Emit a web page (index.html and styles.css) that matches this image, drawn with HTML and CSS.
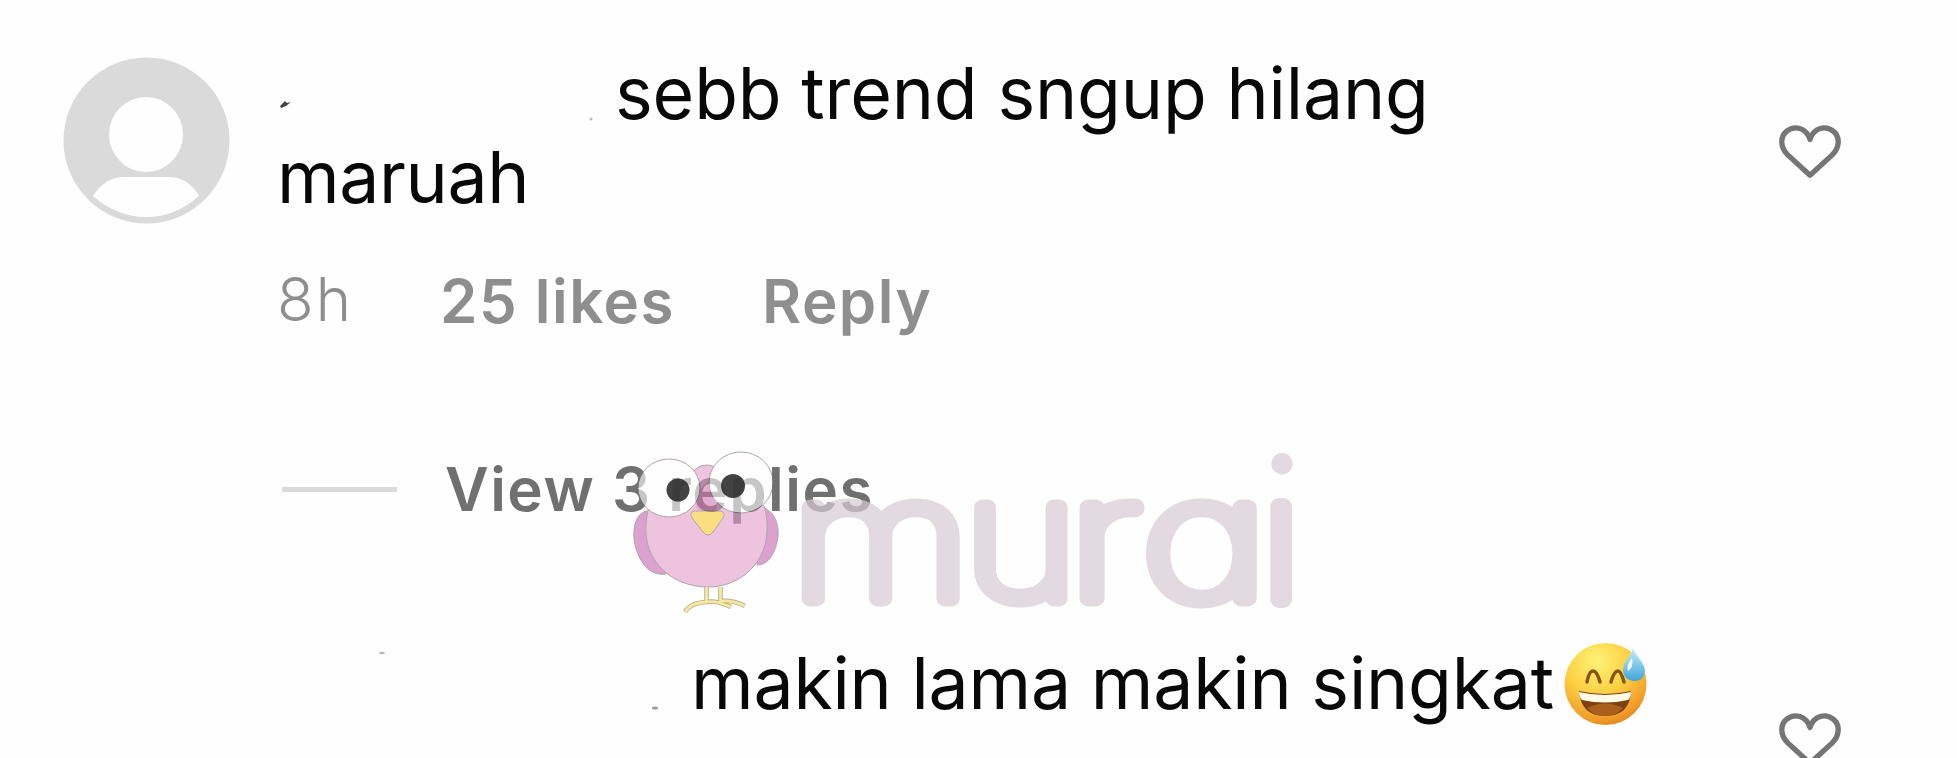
FILE: index.html
```
<!DOCTYPE html>
<html lang="ms">
<head>
  <meta charset="UTF-8" />
  <title>Comments</title>
  <link rel="stylesheet" href="styles.css">
</head>
<body>

<!-- First comment -->
<div class="comment">
  <svg class="avatar" viewBox="0 0 167 167">
    <circle cx="83.5" cy="83.5" r="83" fill="#dadada"/>
    <ellipse cx="83" cy="77.5" rx="37" ry="37.5" fill="#fefefe"/>
    <path d="M30 139Q42 120 61 120H106Q125 120 136 139Q112 160 83.5 160Q54 160 30 139Z" fill="#fefefe"/>
  </svg>
  <div class="body">
    <p class="text"><span class="name"></span><span class="line-one">sebb trend sngup hilang</span><br><span class="line-two">maruah</span></p>
    <div class="meta">
      <span class="time">8h</span>
      <span class="likes">25 likes</span>
      <span class="reply">Reply</span>
    </div>
    <div class="replies">
      <span class="rule"></span>
      <span class="view">View 3 replies</span>
    </div>
  </div>
  <svg class="heart" viewBox="0 0 64 56">
    <path d="M32 52L9 31C1 23 1 12 8 6.500C16 0 28 3 32 15C36 3 48 0 56 6.500C63 12 63 23 55 31Z"/>
  </svg>
</div>

<!-- Second comment -->
<div class="comment second">
  <div class="avatar"></div>
  <div class="body">
    <p class="text"><span class="name long"></span><span class="line-three">makin lama makin singkat</span><svg class="emoji" viewBox="0 0 84 84">
      <defs>
        <radialGradient id="face" cx="40%" cy="22%" r="80%">
          <stop offset="0" stop-color="#fff276"/>
          <stop offset=".5" stop-color="#fbd043"/>
          <stop offset=".85" stop-color="#f3a12b"/>
          <stop offset="1" stop-color="#e58a22"/>
        </radialGradient>
        <linearGradient id="drop" x1="0" y1="0" x2="0" y2="1">
          <stop offset="0" stop-color="#c9eefa"/>
          <stop offset="1" stop-color="#3fa5dc"/>
        </linearGradient>
      </defs>
      <circle cx="41.500" cy="42" r="41" fill="url(#face)"/>
      <path d="M23 40Q25 29 29 29Q33 29 36 40M47 40Q50 29 54 29Q57 29 60 40" fill="none" stroke="#8a5410" stroke-width="3.500" stroke-linecap="round"/>
      <path d="M15 49Q41 55 67 49Q66 74 41 74Q17 74 15 49Z" fill="#7c4210"/>
      <path d="M23 66Q41 57 59 66Q52 74 41 74Q30 74 23 66Z" fill="#a8601c"/>
      <path d="M15 50Q41 56 67 50Q67 56 64 58Q41 63 18 58Q15 55 15 50Z" fill="#fff9e8"/>
      <path d="M69 6C71 14 81 20 81 29Q80 39 70 39Q59 38 59 28C59 20 67 15 69 6Z" fill="url(#drop)"/>
      <path d="M68 16Q62 23 64 29Q70 25 68 16Z" fill="#f2fcff"/>
    </svg></p>
  </div>
  <svg class="heart" viewBox="0 0 64 56">
    <path d="M32 52L9 31C1 23 1 12 8 6.500C16 0 28 3 32 15C36 3 48 0 56 6.500C63 12 63 23 55 31Z"/>
  </svg>
</div>

<!-- Watermark -->
<svg class="watermark" viewBox="630 440 680 180">
  <defs>
    <clipPath id="stem"><rect x="0" y="-103" width="60" height="125"/></clipPath>
  </defs>
  <g class="bird">
    <path d="M647 511C636 513 633 527 634 538C636 558 648 577 666 574Z" fill="#c564b0"/>
    <path d="M764 508C775 512 779 525 778 536C776 552 769 565 757 565Z" fill="#c564b0"/>
    <path d="M707 465C721 465 724 480 736 486L764 506C768 518 768 532 765 545C758 570 735 587 708 587C680 587 655 571 648 545C644 532 646 518 649 506L682 486C691 479 692 465 707 465Z" fill="#e29cca"/>
    <path d="M700 490L707 482L714 490L717 509Q706 515 696 508Z" fill="#d078af" stroke="none"/>
    <path d="M706.500 587V602M720.500 587V602M706 602Q690 603 685 612M706 602Q716 600 731 607M720 601Q733 600 745 606" fill="none" stroke="#857b48" stroke-width="4.500"/>
    <path d="M706.500 587V602M720.500 587V602M706 602Q690 603 685 612M706 602Q716 600 731 607M720 601Q733 600 745 606" fill="none" stroke="#f3da62" stroke-width="2.800"/>
    <ellipse cx="669" cy="488" rx="31" ry="29" fill="#fff"/>
    <ellipse cx="741" cy="482.500" rx="32" ry="30.500" fill="#fff"/>
    <path d="M694 511H721Q726 513 723 518L713 532Q708 538 703 532L692 518Q689 513 694 511Z" fill="#f9cc30"/>
  </g>
  <circle cx="678" cy="490" r="11.500" class="pupil"/>
  <circle cx="733" cy="486" r="12" class="pupil"/>
  <g class="brand">
    <text transform="translate(791 599) scale(1.233 1)">m</text>
    <text transform="translate(964 599) scale(1.158 1)">u</text>
    <text transform="translate(1068 599) scale(1.33 1)">r</text>
    <text transform="translate(1142 599) scale(1.29 1)">a</text>
    <text class="wide" transform="translate(1263 599)" clip-path="url(#stem)">i</text>
    <circle cx="1282" cy="463.700" r="10.700" stroke="none"/>
  </g>
</svg>

<!-- Leftovers of the removed names -->
<svg class="specks" viewBox="0 0 1957 758">
  <path d="M280 106L285 101L287 103L291 102L286 106L281 108Z" fill="#444"/>
  <circle cx="591" cy="119" r="1.500" fill="#bbb"/>
  <ellipse cx="382" cy="653" rx="3" ry="1.200" fill="#bbb"/>
  <ellipse cx="655" cy="708" rx="3" ry="1.500" fill="#999"/>
</svg>

</body>
</html>
```
FILE: styles.css
```
body {
  position: relative;
  margin: 0;
  height: 758px;
  overflow: hidden;
  background: #fefefe;
  color: #080808;
  font-family: Inter, "Liberation Sans", sans-serif;
}

.comment {
  display: flex;
  align-items: flex-start;
  padding: 52px 116px 0 63px;
}

.comment.second {
  height: 116px;
  padding-top: 117px;
  box-sizing: border-box;
}

.avatar {
  flex: none;
  width: 167px;
  height: 167px;
  margin-top: 5px;
}

.second .avatar {
  height: 0;
}

.body {
  flex: 1;
  margin-left: 47px;
}

.text {
  margin: 0;
  font-size: 71.5px;
  line-height: 83.5px;
  white-space: nowrap;
}

.name {
  display: inline-block;
  width: 338px;
}

.name.long {
  width: 414px;
}

.line-one {
  letter-spacing: -0.15px;
}

.line-two {
  letter-spacing: -0.4px;
}

.line-three {
  letter-spacing: -0.2px;
}

.meta {
  display: flex;
  align-items: baseline;
  margin-top: 46px;
  font-size: 60px;
  line-height: 72px;
  color: #8e8e8e;
}

.time {
  position: relative;
  top: -2px;
  width: 163px;
  font-weight: 300;
  letter-spacing: 2px;
}

.likes,
.reply,
.view {
  font-weight: 600;
  letter-spacing: 1.5px;
}

.likes {
  width: 322px;
}

.replies {
  display: flex;
  align-items: center;
  margin-top: 116px;
  font-size: 60px;
  line-height: 72px;
  color: #707070;
}

.rule {
  width: 115px;
  height: 5px;
  margin: 0 48px 0 5px;
  background: #dadada;
}

.heart {
  flex: none;
  width: 62px;
  height: 56px;
  margin-top: 72px;
}

.second .heart {
  margin-top: 70px;
}

.heart path {
  fill: none;
  stroke: #757575;
  stroke-width: 5.5;
  stroke-linejoin: round;
}

.emoji {
  width: 84px;
  height: 84px;
  margin: 0 0 0 10px;
  vertical-align: top;
}

.watermark {
  position: absolute;
  left: 630px;
  top: 440px;
  width: 680px;
  height: 180px;
}

.bird {
  opacity: 0.6;
  stroke: #7c6878;
  stroke-width: 1;
}

.pupil {
  fill: #222;
  fill-opacity: 0.85;
}

.brand {
  font-size: 168px;
  font-weight: 100;
  font-feature-settings: "cv11";
  fill: #d8cad6;
  stroke: #d8cad6;
  stroke-width: 15;
  stroke-linejoin: round;
  opacity: 0.7;
}

.brand .wide {
  stroke-width: 18;
}

.specks {
  position: absolute;
  left: 0;
  top: 0;
  width: 1957px;
  height: 758px;
}
```
